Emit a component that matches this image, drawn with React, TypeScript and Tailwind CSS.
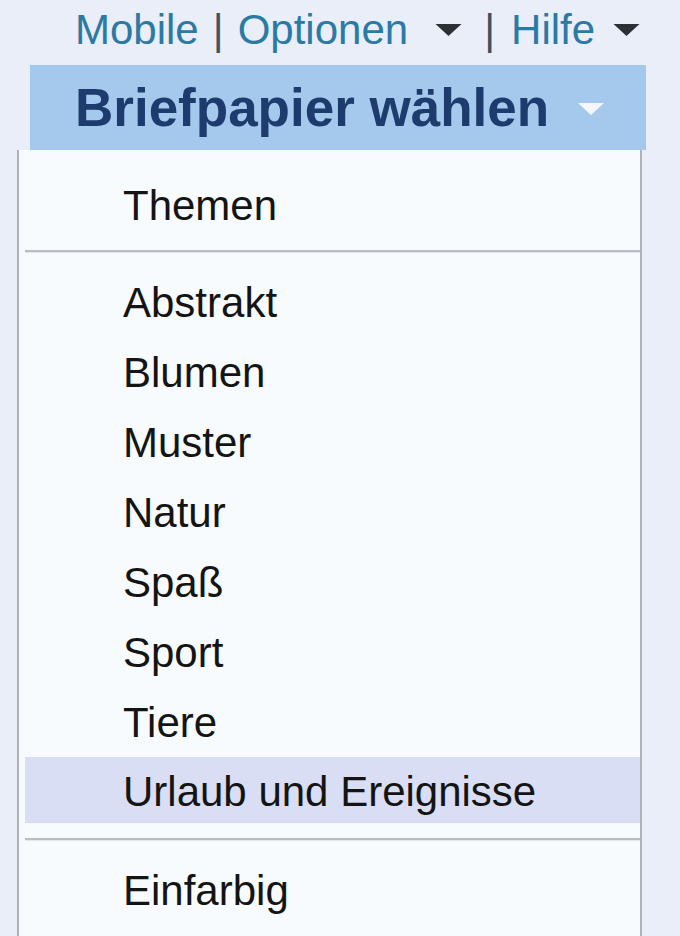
const items = ['Abstrakt', 'Blumen', 'Muster', 'Natur', 'Spaß', 'Sport', 'Tiere'];

function DownArrow({ className }: { className: string }) {
  return (
    <svg viewBox="0 0 26 12" className={className}>
      <path d="M0 0 H26 L13 12 Z" fill="currentColor" />
    </svg>
  );
}

function Separator() {
  return <div className="ml-[6px] h-[2px] bg-[#b9bdc2] shadow-[0_1px_0_#e2e5e9]" />;
}

function Item({ label, active = false }: { label: string; active?: boolean }) {
  return (
    <div
      className={
        active
          ? 'ml-[6px] flex h-[66px] items-center bg-[#d9def4] pl-[98px] pt-[2px]'
          : 'flex h-[70px] items-center pl-[104px]'
      }
    >
      {label}
    </div>
  );
}

export default function App() {
  return (
    <div className="h-[936px] w-[680px] overflow-hidden bg-[#e9eef8] font-['Liberation_Sans',Arial,sans-serif]">
      {/* top links */}
      <div className="flex h-[65px] items-center pl-[75px] pb-[6px] text-[42px] text-[#2b7aa5]">
        <span>Mobile</span>
        <span className="mx-[14px] text-[#44505c]">|</span>
        <span>Optionen</span>
        <DownArrow className="ml-[27px] h-[12px] w-[27px] text-[#2c2f33]" />
        <span className="ml-[22px] mr-[16px] text-[#44505c]">|</span>
        <span>Hilfe</span>
        <DownArrow className="ml-[18px] h-[12px] w-[27px] text-[#2c2f33]" />
      </div>

      {/* stationery header */}
      <div className="ml-[30px] flex h-[85px] w-[616px] items-center bg-[#a5c9ec] pl-[45px]">
        <span className="text-[53px] font-bold text-[#1d3b6c]">Briefpapier wählen</span>
        <DownArrow className="ml-[28px] mt-[2px] h-[12px] w-[28px] text-[#f4f8fd]" />
      </div>

      {/* menu */}
      <div className="ml-[17px] w-[625px] border-l-2 border-[#aeb2b7] bg-[#f8fbfe] text-[42px] text-[#141414]">
        <div className="mt-[12px] border-r-2 border-[#aeb2b7]">
          <div className="-mt-[12px] pt-[20px] pb-[10px]">
            <Item label="Themen" />
          </div>
          <Separator />
          <div className="pt-[15px] pb-[15px]">
            {items.map((label) => (
              <Item key={label} label={label} />
            ))}
            <Item label="Urlaub und Ereignisse" active />
          </div>
          <Separator />
          <div className="pt-[15px] pb-[40px]">
            <Item label="Einfarbig" />
          </div>
        </div>
      </div>
    </div>
  );
}
